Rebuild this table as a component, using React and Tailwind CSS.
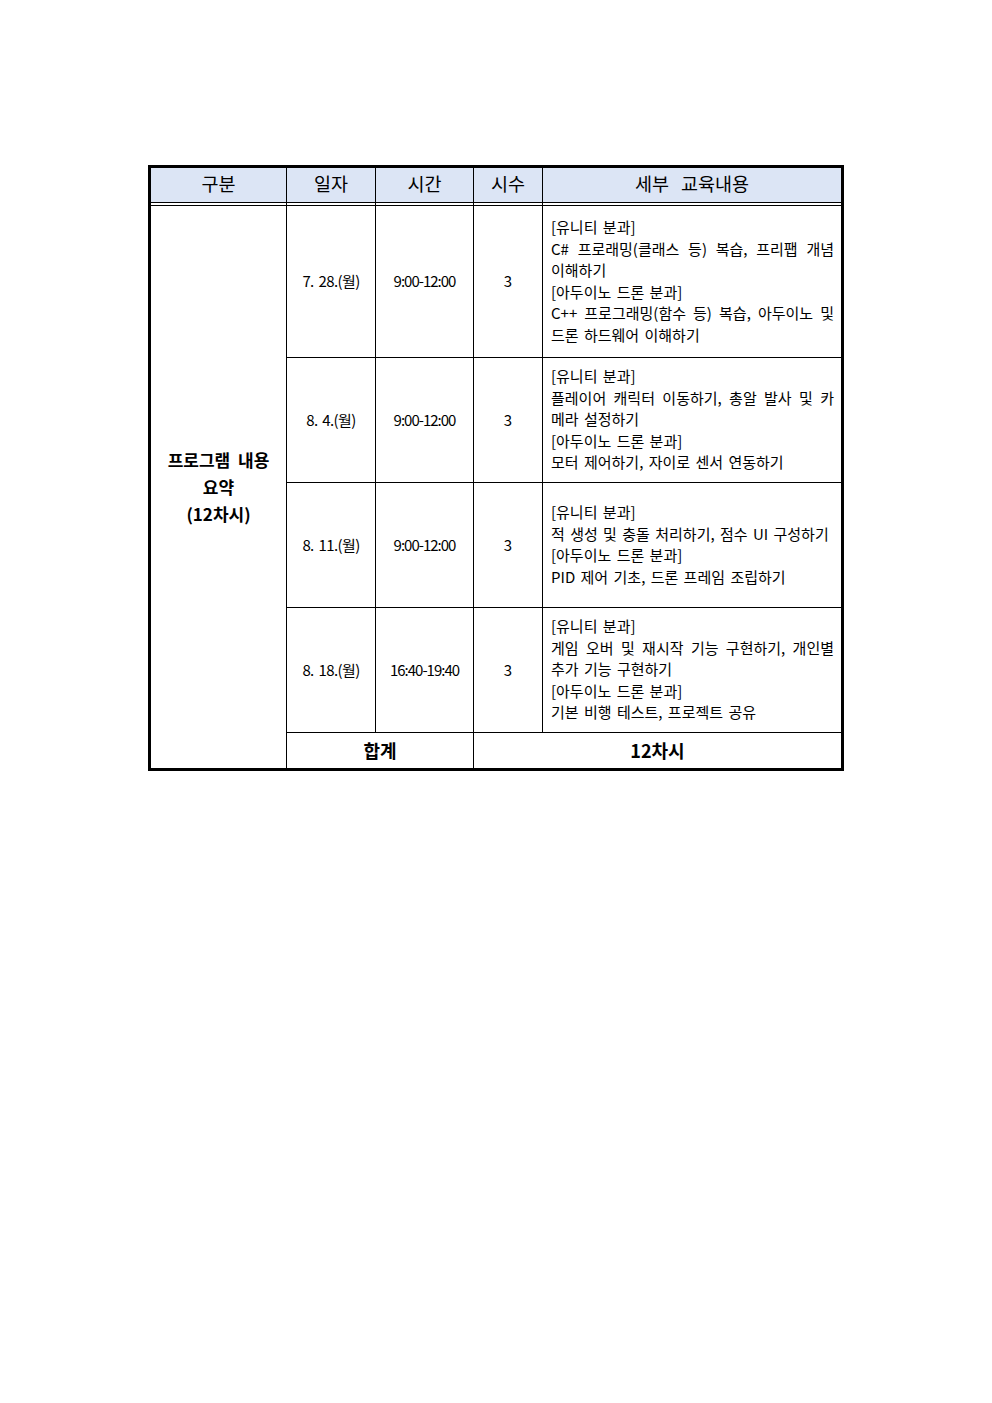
import React from "react";

const J = "text-justify [text-align-last:justify]";

function Line({ children, justify }) {
  return <div className={justify ? J : "text-left"}>{children}</div>;
}

function Content({ lines }) {
  return (
    <div className="bg-white flex flex-col justify-center pl-2 pr-[7px] pb-[2px] text-[15px] leading-[21.5px] tracking-[0px] [word-spacing:2px] whitespace-nowrap">
      {lines.map((l, i) => (
        <Line key={i} justify={l.j}>
          {l.t}
        </Line>
      ))}
    </div>
  );
}

function Cell({ children, className = "" }) {
  return (
    <div className={"bg-white flex items-center justify-center " + className}>
      {children}
    </div>
  );
}

const rows = [
  {
    date: "7. 28.(월)",
    time: "9:00-12:00",
    lines: [
      { t: "[유니티 분과]" },
      { t: "C# 프로래밍(클래스 등) 복습, 프리팹 개념", j: true },
      { t: "이해하기" },
      { t: "[아두이노 드론 분과]" },
      { t: "C++ 프로그래밍(함수 등) 복습, 아두이노 및", j: true },
      { t: "드론 하드웨어 이해하기" },
    ],
  },
  {
    date: "8. 4.(월)",
    time: "9:00-12:00",
    lines: [
      { t: "[유니티 분과]" },
      { t: "플레이어 캐릭터 이동하기, 총알 발사 및 카", j: true },
      { t: "메라 설정하기" },
      { t: "[아두이노 드론 분과]" },
      { t: "모터 제어하기, 자이로 센서 연동하기" },
    ],
  },
  {
    date: "8. 11.(월)",
    time: "9:00-12:00",
    lines: [
      { t: "[유니티 분과]" },
      { t: "적 생성 및 충돌 처리하기, 점수 UI 구성하기" },
      { t: "[아두이노 드론 분과]" },
      { t: "PID 제어 기초, 드론 프레임 조립하기" },
    ],
  },
  {
    date: "8. 18.(월)",
    time: "16:40-19:40",
    lines: [
      { t: "[유니티 분과]" },
      { t: "게임 오버 및 재시작 기능 구현하기, 개인별", j: true },
      { t: "추가 기능 구현하기" },
      { t: "[아두이노 드론 분과]" },
      { t: "기본 비행 테스트, 프로젝트 공유" },
    ],
  },
];

export default function App() {
  return (
    <div className="min-h-[1403px] w-full bg-white pt-[165px] text-black font-['Noto_Sans_CJK_KR','Noto_Sans',sans-serif]">
      <div className="mx-auto w-[696px] border-[3px] border-black">
        <div className="grid grid-cols-[135px_88px_97px_68px_298px] grid-rows-[34px_2px_151px_124px_124px_124px_35px] gap-px bg-black">
          {["구분", "일자", "시간", "시수"].map((h) => (
            <div
              key={h}
              className="bg-[#dce5f5] flex items-center justify-center text-[18.5px] leading-none pb-[4px]"
            >
              {h}
            </div>
          ))}
          <div className="bg-[#dce5f5] flex items-center justify-center text-[18.5px] leading-none pb-[4px]">
            <span>세부</span>
            <span className="ml-[12px]">교육내용</span>
          </div>

          <div className="bg-white" />
          <div className="bg-white" />
          <div className="bg-white" />
          <div className="bg-white" />
          <div className="bg-white" />

          <div className="row-span-5 bg-white flex flex-col items-center justify-center text-[17px] font-bold leading-[27px] [word-spacing:4px] pb-[1px]">
            <div>프로그램 내용</div>
            <div>요약</div>
            <div>(12차시)</div>
          </div>

          {rows.map((r, i) => (
            <React.Fragment key={i}>
              <Cell className="text-[15px] tracking-[-0.6px] [word-spacing:2px]">{r.date}</Cell>
              <Cell className="text-[15px] tracking-[-1px]">{r.time}</Cell>
              <Cell className="text-[15px]">3</Cell>
              <Content lines={r.lines} />
            </React.Fragment>
          ))}

          <Cell className="col-span-2 text-[18px] font-bold">합계</Cell>
          <Cell className="col-span-2 text-[18px] font-bold">12차시</Cell>
        </div>
      </div>
    </div>
  );
}
